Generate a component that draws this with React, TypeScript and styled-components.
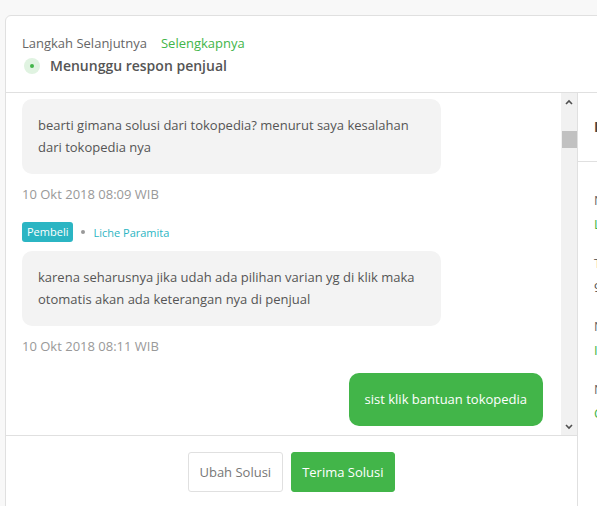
import React from 'react';
import styled, { createGlobalStyle } from 'styled-components';

const GlobalStyle = createGlobalStyle`
  html, body {
    margin: 0;
    padding: 0;
    background: #f8f8f8;
    overflow: hidden;
    font-family: 'Open Sans', 'Liberation Sans', sans-serif;
  }
`;

const Page = styled.div`
  padding: 15px 0 0 5px;
  height: 506px;
  box-sizing: border-box;
`;

const Card = styled.div`
  width: 900px;
  height: 600px;
  background: #fff;
  border: 1px solid #e0e0e0;
  border-radius: 6px 6px 0 0;
  display: flex;
  flex-direction: column;
`;

const Header = styled.div`
  padding: 17px 16px 16px;
  border-bottom: 1px solid #e0e0e0;
`;

const StepRow = styled.div`
  display: flex;
  align-items: center;
  gap: 14px;
  font-size: 13px;
  line-height: 20px;
  color: #666;
`;

const GreenLink = styled.a`
  color: #42b549;
  text-decoration: none;
`;

const StatusRow = styled.div`
  display: flex;
  align-items: center;
  gap: 10px;
  margin-top: 3px;
  font-size: 14px;
  font-weight: 600;
  line-height: 20px;
  color: #555;
`;

const StatusDot = styled.span`
  width: 16px;
  height: 16px;
  margin-left: 2px;
  border-radius: 50%;
  background: #e0f3e1;
  display: flex;
  align-items: center;
  justify-content: center;

  &::after {
    content: '';
    width: 4px;
    height: 4px;
    border-radius: 50%;
    background: #42b549;
  }
`;

const Body = styled.div`
  display: flex;
  flex: 1;
`;

const Main = styled.div`
  width: 571px;
  flex-shrink: 0;
  border-right: 1px solid #e0e0e0;
  display: flex;
  flex-direction: column;
`;

const ChatArea = styled.div`
  height: 342px;
  display: flex;
  border-bottom: 1px solid #e0e0e0;
`;

const ChatList = styled.div`
  flex: 1;
  overflow: hidden;
  padding: 6px 18px 0 16px;
  display: flex;
  flex-direction: column;
  align-items: flex-start;
`;

const Bubble = styled.div<{ $mine?: boolean; $gap: number }>`
  max-width: 387px;
  margin-top: ${(p) => p.$gap}px;
  padding: 15px 16px 16px;
  border-radius: 10px;
  font-size: 13px;
  line-height: 22px;
  background: ${(p) => (p.$mine ? '#42b549' : '#f3f3f3')};
  color: ${(p) => (p.$mine ? '#fff' : '#555')};
  align-self: ${(p) => (p.$mine ? 'flex-end' : 'flex-start')};
  width: ${(p) => (p.$mine ? 'auto' : '387px')};
`;

const Time = styled.div<{ $gap: number }>`
  margin-top: ${(p) => p.$gap}px;
  font-size: 13px;
  line-height: 18px;
  color: #999;
`;

const Sender = styled.div`
  margin-top: 19px;
  display: flex;
  align-items: center;
  gap: 8px;
  font-size: 11px;
  color: #2bb5c3;
`;

const RoleBadge = styled.span`
  height: 20px;
  line-height: 20px;
  padding: 0 5px;
  border-radius: 3px;
  background: #2bb5c3;
  color: #fff;
  font-size: 11px;
`;

const Dot = styled.span`
  width: 4px;
  height: 4px;
  border-radius: 50%;
  background: #999;
`;

const ScrollTrack = styled.div`
  width: 16px;
  background: #f1f1f1;
  display: flex;
  flex-direction: column;
  align-items: center;
`;

const ScrollArrow = styled.div`
  height: 17px;
  width: 16px;
  display: flex;
  align-items: center;
  justify-content: center;
  color: #505050;
`;

const ScrollThumb = styled.div`
  margin-top: 21px;
  width: 15px;
  height: 17px;
  background: #c1c1c1;
`;

const Spacer = styled.div`
  flex: 1;
`;

const Footer = styled.div`
  padding-top: 16px;
  display: flex;
  justify-content: center;
  gap: 8px;
`;

const Button = styled.button<{ $primary?: boolean }>`
  height: 40px;
  padding: 0 10.5px;
  border-radius: 3px;
  font-family: 'Open Sans', 'Liberation Sans', sans-serif;
  font-size: 13px;
  border: 1px solid ${(p) => (p.$primary ? '#42b549' : '#e0e0e0')};
  background: ${(p) => (p.$primary ? '#42b549' : '#fff')};
  color: ${(p) => (p.$primary ? '#fff' : '#777')};
`;

const Side = styled.div`
  flex: 1;
  display: flex;
  flex-direction: column;
`;

const SideHeader = styled.div`
  height: 69px;
  padding: 24px 16px 0;
  box-sizing: border-box;
  border-bottom: 1px solid #e0e0e0;
  font-size: 14px;
  font-weight: 700;
  line-height: 20px;
  color: #444;
`;

const SideList = styled.div`
  padding: 26px 16px 0;
  display: flex;
  flex-direction: column;
  gap: 15px;
`;

const InfoItem = styled.div`
  font-size: 13px;
  line-height: 24px;
`;

const InfoLabel = styled.div`
  color: #666;
`;

const InfoValue = styled.div<{ $link?: boolean }>`
  color: ${(p) => (p.$link ? '#42b549' : '#555')};
`;

const Chevron = ({ up }: { up?: boolean }) => (
  <svg width="8" height="6" viewBox="0 0 8 6">
    <path
      d={up ? 'M1 5 L4 2 L7 5' : 'M1 1 L4 4 L7 1'}
      fill="none"
      stroke="currentColor"
      strokeWidth="1.6"
    />
  </svg>
);

const info = [
  { label: 'Nama Toko', value: 'Liche Shop', link: true },
  { label: 'Tanggal Komplain', value: '9 Okt 2018' },
  { label: 'Nomor Invoice', value: 'INV/20181005/XVIII/X/210', link: true },
  { label: 'Nama Produk', value: 'Celana Kulot Wanita', link: true },
];

export default function App() {
  return (
    <Page>
      <GlobalStyle />
      <Card>
        <Header>
          <StepRow>
            <span>Langkah Selanjutnya</span>
            <GreenLink href="#">Selengkapnya</GreenLink>
          </StepRow>
          <StatusRow>
            <StatusDot />
            <span>Menunggu respon penjual</span>
          </StatusRow>
        </Header>
        <Body>
          <Main>
            <ChatArea>
              <ChatList>
                <Bubble $gap={0}>
                  bearti gimana solusi dari tokopedia? menurut saya kesalahan dari tokopedia nya
                </Bubble>
                <Time $gap={11}>10 Okt 2018 08:09 WIB</Time>
                <Sender>
                  <RoleBadge>Pembeli</RoleBadge>
                  <Dot />
                  <span>Liche Paramita</span>
                </Sender>
                <Bubble $gap={9}>
                  karena seharusnya jika udah ada pilihan varian yg di klik maka otomatis akan ada keterangan nya di penjual
                </Bubble>
                <Time $gap={11}>10 Okt 2018 08:11 WIB</Time>
                <Bubble $mine $gap={18}>
                  sist klik bantuan tokopedia
                </Bubble>
              </ChatList>
              <ScrollTrack>
                <ScrollArrow>
                  <Chevron up />
                </ScrollArrow>
                <ScrollThumb />
                <Spacer />
                <ScrollArrow>
                  <Chevron />
                </ScrollArrow>
              </ScrollTrack>
            </ChatArea>
            <Footer>
              <Button>Ubah Solusi</Button>
              <Button $primary>Terima Solusi</Button>
            </Footer>
          </Main>
          <Side>
            <SideHeader>Detail Komplain</SideHeader>
            <SideList>
              {info.map((item) => (
                <InfoItem key={item.label}>
                  <InfoLabel>{item.label}</InfoLabel>
                  <InfoValue $link={item.link}>{item.value}</InfoValue>
                </InfoItem>
              ))}
            </SideList>
          </Side>
        </Body>
      </Card>
    </Page>
  );
}
